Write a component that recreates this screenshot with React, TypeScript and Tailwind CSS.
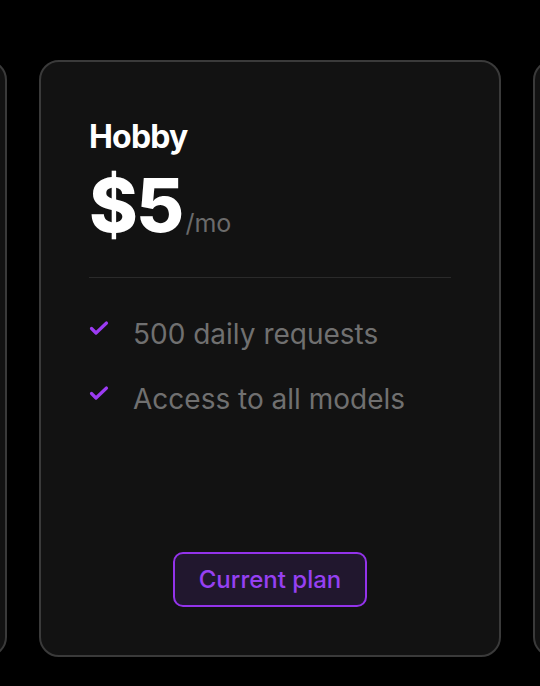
import React from "react";

const features = ["500 daily requests", "Access to all models"];

const Check = () => (
  <svg
    width="20"
    height="20"
    viewBox="0 0 20 20"
    fill="none"
    stroke="#9b3bf2"
    strokeWidth="3.2"
    strokeLinecap="round"
    strokeLinejoin="round"
    className="shrink-0"
  >
    <path d="M2.5 10.5 L7 15 L17.5 5" />
  </svg>
);

const SideCard: React.FC = () => (
  <div className="h-[597px] w-[462px] shrink-0 rounded-[20px] border-2 border-[#3a3a3a] bg-[#121212]" />
);

const App: React.FC = () => {
  return (
    <main
      className="flex min-h-[686px] justify-center gap-8 overflow-hidden bg-black pt-[60px]"
      style={{ fontFamily: "Inter, 'Liberation Sans', sans-serif" }}
    >
      <SideCard />
      <div className="flex h-[597px] w-[462px] shrink-0 flex-col rounded-[20px] border-2 border-[#3a3a3a] bg-[#121212] px-12 pb-12 pt-[57px]">
        <h2 className="text-[32px] font-bold leading-9 tracking-tight text-white">Hobby</h2>
        <div className="mt-[13px] flex items-baseline">
          <span className="text-[74px] font-extrabold leading-none tracking-tight text-white">$5</span>
          <span className="ml-[3px] text-[25px] text-[#6b6b6b]">/mo</span>
        </div>
        <div className="mt-[34px] h-px w-full bg-[#2a2a2a]" />
        <ul className="mt-[40px] flex flex-col gap-[33px]">
          {features.map((f) => (
            <li key={f} className="flex items-start gap-6">
              <span className="pt-0">
                <Check />
              </span>
              <span className="text-[28px] leading-8 text-[#707070]">{f}</span>
            </li>
          ))}
        </ul>
        <div className="mt-auto flex justify-center">
          <button className="h-[55px] rounded-[10px] border-2 border-[#9333ea] bg-[#21172e] px-6 text-[24px] font-medium text-[#9640f2]">
            Current plan
          </button>
        </div>
      </div>
      <SideCard />
    </main>
  );
};

export default App;
